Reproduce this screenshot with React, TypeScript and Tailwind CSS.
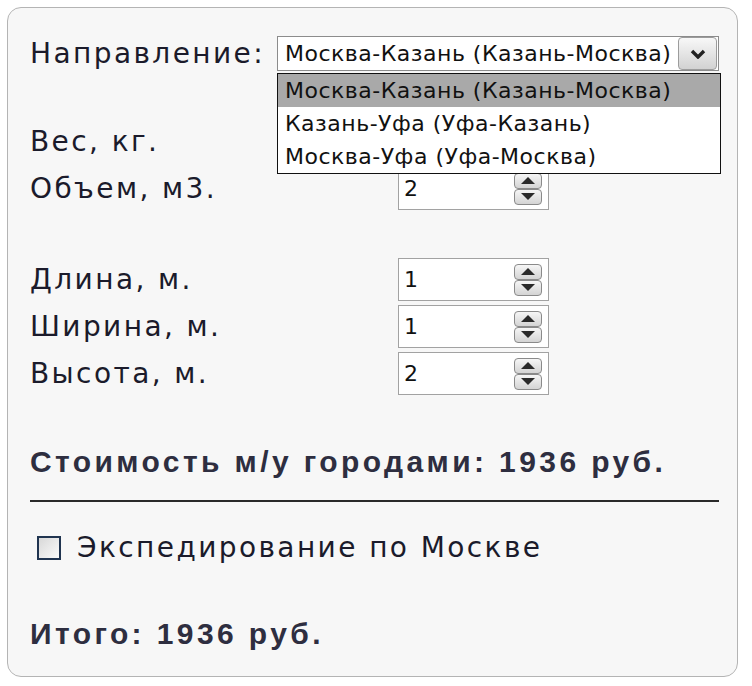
import React from "react";

const label = "[font-family:'DejaVu_Sans',sans-serif] text-[28px] tracking-[2.4px] text-[#1b1b2b]";
const bold = "[font-family:'Liberation_Sans',Arial,sans-serif] text-[30px] font-bold leading-[30px] tracking-[3.4px] text-[#2e2e40]";

const options = [
  "Москва-Казань (Казань-Москва)",
  "Казань-Уфа (Уфа-Казань)",
  "Москва-Уфа (Уфа-Москва)",
];

function Spinner() {
  return (
    <div className="flex flex-col">
      <div className="flex h-[16px] w-[28px] items-center justify-center rounded-[4px] border border-[#8a8a8a] bg-gradient-to-b from-[#f6f6f6] to-[#d4d4d4]">
        <svg width="16" height="9" viewBox="0 0 16 9">
          <polygon points="8,1 15,8 1,8" fill="#2a2a2a" />
        </svg>
      </div>
      <div className="flex h-[16px] w-[28px] items-center justify-center rounded-[4px] border border-[#8a8a8a] bg-gradient-to-b from-[#f6f6f6] to-[#d4d4d4]">
        <svg width="16" height="9" viewBox="0 0 16 9">
          <polygon points="1,1 15,1 8,8" fill="#2a2a2a" />
        </svg>
      </div>
    </div>
  );
}

function Row({ name, value }: { name: string; value: string }) {
  return (
    <div className="flex h-[47px] items-center">
      <div className={`${label} w-[368px]`}>{name}</div>
      <div className="flex h-[43px] w-[151px] items-center justify-between border border-[#a2a2a2] bg-white pl-[5px] pr-[6px]">
        <span className="[font-family:'DejaVu_Sans',sans-serif] text-[22px] text-[#111]">{value}</span>
        <Spinner />
      </div>
    </div>
  );
}

export default function App() {
  return (
    <div className="min-h-screen bg-white p-[7px]">
      <div className="flex h-[670px] w-[731px] flex-col rounded-[14px] border border-[#b4b4b4] bg-[#f7f7f7] pl-[22px] pt-[28px]">
        <div className="flex items-center">
          <div className={`${label} w-[247px] leading-[35px]`}>Направление:</div>
          <div className="relative z-10">
            <div className="flex h-[35px] w-[442px] items-center justify-between border border-[#8c8c8c] bg-white pl-[7px] pr-px">
              <span className="[font-family:'DejaVu_Sans',sans-serif] text-[22px] tracking-[0.5px] text-[#111]">
                {options[0]}
              </span>
              <div className="flex h-[33px] w-[39px] items-center justify-center rounded-[4px] border border-[#9c9c9c] bg-gradient-to-b from-[#f8f8f8] to-[#d2d2d2]">
                <svg width="16" height="10" viewBox="0 0 16 10">
                  <path d="M2 2 L8 8 L14 2" fill="none" stroke="#222" strokeWidth="3.4" />
                </svg>
              </div>
            </div>
            <div className="absolute left-0 top-[37px] w-[444px] border border-[#111] bg-white">
              {options.map((o, i) => (
                <div
                  key={o}
                  className={`flex h-[33px] items-center px-[7px] [font-family:'DejaVu_Sans',sans-serif] text-[22px] tracking-[0.5px] text-[#111] ${
                    i === 0 ? "bg-[#a9a9a9]" : ""
                  }`}
                >
                  {o}
                </div>
              ))}
            </div>
          </div>
        </div>

        <div className="mt-[47px]">
          <Row name="Вес, кг." value="" />
          <Row name="Объем, м3." value="2" />
        </div>

        <div className="mt-[44px]">
          <Row name="Длина, м." value="1" />
          <Row name="Ширина, м." value="1" />
          <Row name="Высота, м." value="2" />
        </div>

        <div className={`mt-[50px] ${bold}`}>Стоимость м/у городами: 1936 руб.</div>

        <div className="mr-[18px] mt-[23px] h-[2px] bg-[#2a2a2a]" />

        <div className="ml-[7px] mt-[28px] flex h-[35px] items-center gap-[16px]">
          <div className="h-[24px] w-[24px] border-2 border-[#203450] bg-gradient-to-br from-[#d8d8d8] to-[#fbfbfb]" />
          <span className={label}>Экспедирование по Москве</span>
        </div>

        <div className={`mt-[54px] ${bold}`}>Итого: 1936 руб.</div>
      </div>
    </div>
  );
}
